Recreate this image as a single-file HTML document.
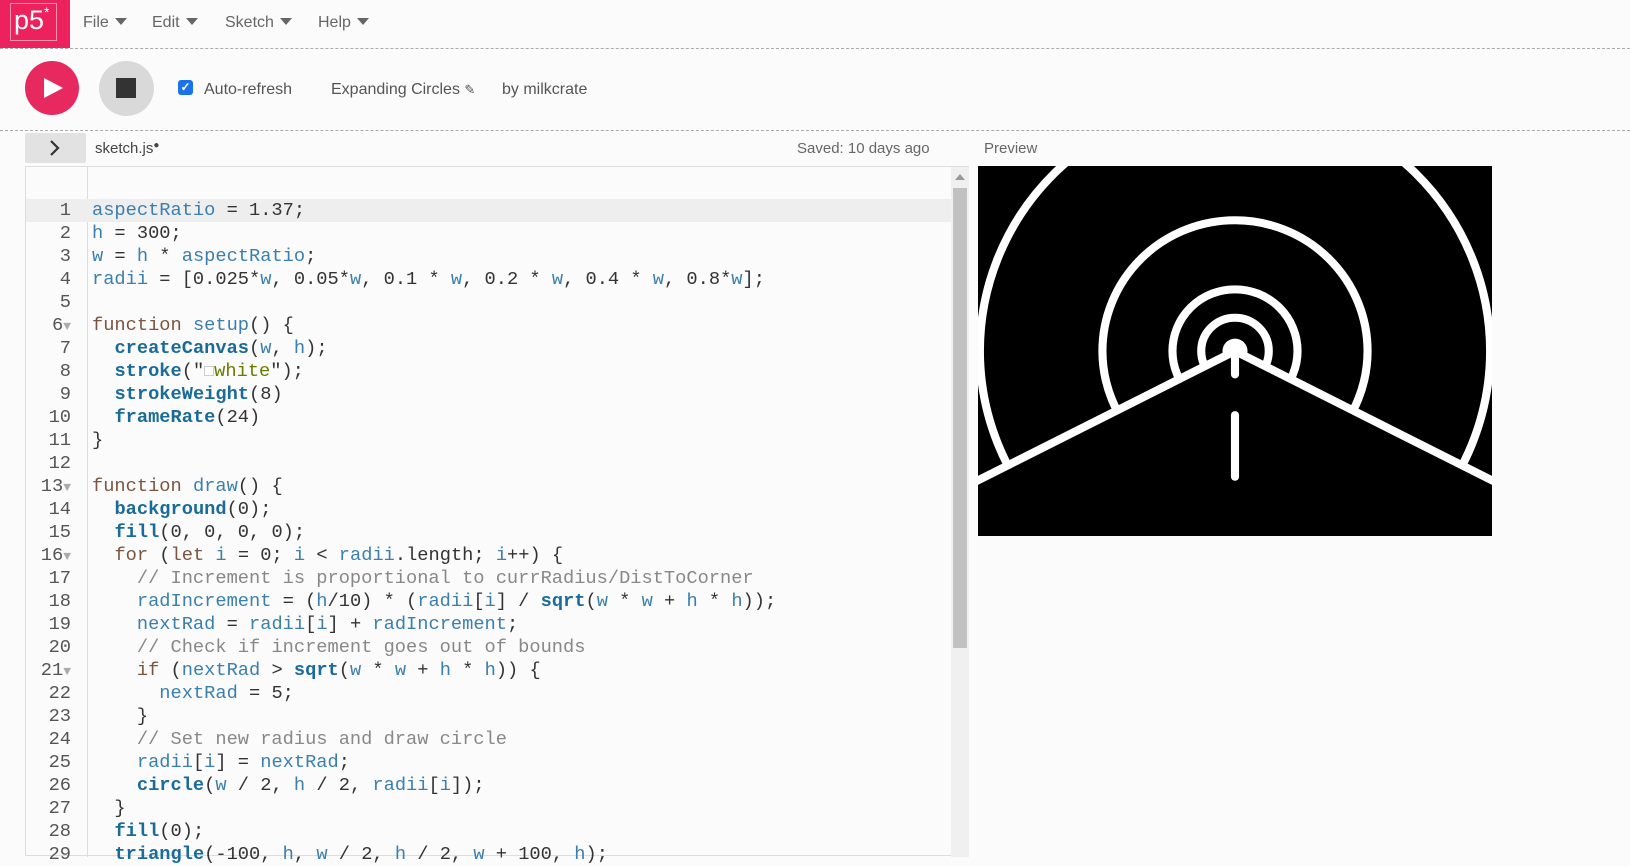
<!DOCTYPE html>
<html><head><meta charset="utf-8"><style>
*{margin:0;padding:0;box-sizing:border-box}
body{width:1630px;height:848px;overflow:hidden;background:#fbfbfb;font-family:"Liberation Sans",sans-serif;color:#333;position:relative}
.abs{position:absolute}
.menu{top:14px;font-size:16px;color:#666}
.menu .tri{display:inline-block;width:0;height:0;border-left:6px solid transparent;border-right:6px solid transparent;border-top:7px solid #666;margin-left:6px;vertical-align:2px}
.dash{left:0;width:1630px;height:0;border-top:1px dashed #aaa}
.code{font-family:"Liberation Mono",monospace;font-size:18.7px;line-height:23px;white-space:pre}
.ln{position:absolute;left:25px;width:46px;text-align:right;color:#555}
.v{color:#3a7fae}.b{color:#1a6b9a;font-weight:bold}.k{color:#7a5640}.c{color:#888}.s{color:#6b7a00}
</style></head><body>
<div class="abs" style="left:0;top:0;width:70px;height:48px;background:#ed225d"></div>
<div class="abs" style="left:10px;top:3px;width:47px;height:38px;border:1px solid rgba(255,255,255,.5)"></div>
<div class="abs" style="left:14px;top:4px;color:#fff;font-size:27px">p5<span style="font-size:14px;vertical-align:12px">*</span></div>
<div class="abs menu" style="left:83px">File<span class="tri"></span></div>
<div class="abs menu" style="left:152px">Edit<span class="tri"></span></div>
<div class="abs menu" style="left:225px">Sketch<span class="tri"></span></div>
<div class="abs menu" style="left:318px">Help<span class="tri"></span></div>
<div class="abs dash" style="top:48px"></div>
<div class="abs" style="left:25px;top:61px;width:54px;height:54px;border-radius:50%;background:#e8295f"></div>
<div class="abs" style="left:44px;top:78px;width:0;height:0;border-top:10px solid transparent;border-bottom:10px solid transparent;border-left:19px solid #fff"></div>
<div class="abs" style="left:99px;top:61px;width:55px;height:55px;border-radius:50%;background:#d9d9d9"></div>
<div class="abs" style="left:116px;top:78px;width:20px;height:20px;background:#333"></div>
<div class="abs" style="left:178px;top:80px;width:15px;height:15px;border-radius:3px;background:#1a73e8;color:#fff;font-size:12px;line-height:15px;text-align:center;font-weight:bold">✓</div>
<div class="abs" style="left:204px;top:81px;font-size:16px;color:#555">Auto-refresh</div>
<div class="abs" style="left:331px;top:81px;font-size:16px;color:#555">Expanding Circles <span style="font-size:13px">✎</span></div>
<div class="abs" style="left:502px;top:81px;font-size:16px;color:#555">by milkcrate</div>
<div class="abs dash" style="top:130px"></div>
<div class="abs" style="left:25px;top:133px;width:61px;height:30px;background:#e2e2e2;border-radius:2px"></div>
<svg class="abs" style="left:47px;top:139px" width="16" height="18"><path d="M4 2 L11 9 L4 16" fill="none" stroke="#333" stroke-width="2.2"/></svg>
<div class="abs" style="left:95px;top:140px;font-size:15px;color:#444">sketch.js<span style="font-size:10px;vertical-align:5px">●</span></div>
<div class="abs" style="left:797px;top:140px;font-size:15px;color:#666">Saved: 10 days ago</div>
<div class="abs" style="left:984px;top:140px;font-size:15px;color:#666">Preview</div>
<div class="abs" style="left:25px;top:166px;width:944px;height:690px;border:1px solid #ddd;background:#fbfbfb"></div>
<div class="abs" style="left:87px;top:167px;width:1px;height:690px;background:#ddd"></div>
<div class="abs" style="left:26px;top:199px;width:925px;height:23px;background:#eee"></div>
<div class="abs" style="left:951px;top:167px;width:18px;height:690px;background:#f0f0f0"></div>
<div class="abs" style="left:953px;top:188px;width:14px;height:460px;background:#c1c1c1"></div>
<div class="abs" style="left:955px;top:174px;width:0;height:0;border-left:5px solid transparent;border-right:5px solid transparent;border-bottom:6px solid #999"></div>
<div class="abs code" style="left:0;top:199px;width:100px">
<div class="ln" style="top:0">1</div><div class="ln" style="top:23px">2</div><div class="ln" style="top:46px">3</div><div class="ln" style="top:69px">4</div><div class="ln" style="top:92px">5</div><div class="ln" style="top:115px">6<span style="color:#aaa;font-size:13px">▼</span></div><div class="ln" style="top:138px">7</div><div class="ln" style="top:161px">8</div><div class="ln" style="top:184px">9</div><div class="ln" style="top:207px">10</div><div class="ln" style="top:230px">11</div><div class="ln" style="top:253px">12</div><div class="ln" style="top:276px">13<span style="color:#aaa;font-size:13px">▼</span></div><div class="ln" style="top:299px">14</div><div class="ln" style="top:322px">15</div><div class="ln" style="top:345px">16<span style="color:#aaa;font-size:13px">▼</span></div><div class="ln" style="top:368px">17</div><div class="ln" style="top:391px">18</div><div class="ln" style="top:414px">19</div><div class="ln" style="top:437px">20</div><div class="ln" style="top:460px">21<span style="color:#aaa;font-size:13px">▼</span></div><div class="ln" style="top:483px">22</div><div class="ln" style="top:506px">23</div><div class="ln" style="top:529px">24</div><div class="ln" style="top:552px">25</div><div class="ln" style="top:575px">26</div><div class="ln" style="top:598px">27</div><div class="ln" style="top:621px">28</div><div class="ln" style="top:644px">29</div>
</div>
<div class="abs code" style="left:92px;top:199px"><span class="v">aspectRatio</span> = 1.37;
<span class="v">h</span> = 300;
<span class="v">w</span> = <span class="v">h</span> * <span class="v">aspectRatio</span>;
<span class="v">radii</span> = [0.025*<span class="v">w</span>, 0.05*<span class="v">w</span>, 0.1 * <span class="v">w</span>, 0.2 * <span class="v">w</span>, 0.4 * <span class="v">w</span>, 0.8*<span class="v">w</span>];

<span class="k">function</span> <span class="v">setup</span>() {
  <span class="b">createCanvas</span>(<span class="v">w</span>, <span class="v">h</span>);
  <span class="b">stroke</span>("<span style="display:inline-block;width:10px;height:10px;border:1px solid #ccc;background:#fff"></span><span class="s">white</span>");
  <span class="b">strokeWeight</span>(8)
  <span class="b">frameRate</span>(24)
}

<span class="k">function</span> <span class="v">draw</span>() {
  <span class="b">background</span>(0);
  <span class="b">fill</span>(0, 0, 0, 0);
  <span class="k">for</span> (<span class="k">let</span> <span class="v">i</span> = 0; <span class="v">i</span> &lt; <span class="v">radii</span>.length; <span class="v">i</span>++) {
    <span class="c">// Increment is proportional to currRadius/DistToCorner</span>
    <span class="v">radIncrement</span> = (<span class="v">h</span>/10) * (<span class="v">radii</span>[<span class="v">i</span>] / <span class="b">sqrt</span>(<span class="v">w</span> * <span class="v">w</span> + <span class="v">h</span> * <span class="v">h</span>));
    <span class="v">nextRad</span> = <span class="v">radii</span>[<span class="v">i</span>] + <span class="v">radIncrement</span>;
    <span class="c">// Check if increment goes out of bounds</span>
    <span class="k">if</span> (<span class="v">nextRad</span> &gt; <span class="b">sqrt</span>(<span class="v">w</span> * <span class="v">w</span> + <span class="v">h</span> * <span class="v">h</span>)) {
      <span class="v">nextRad</span> = 5;
    }
    <span class="c">// Set new radius and draw circle</span>
    <span class="v">radii</span>[<span class="v">i</span>] = <span class="v">nextRad</span>;
    <span class="b">circle</span>(<span class="v">w</span> / 2, <span class="v">h</span> / 2, <span class="v">radii</span>[<span class="v">i</span>]);
  }
  <span class="b">fill</span>(0);
  <span class="b">triangle</span>(-100, <span class="v">h</span>, <span class="v">w</span> / 2, <span class="v">h</span> / 2, <span class="v">w</span> + 100, <span class="v">h</span>);</div>
<svg class="abs" style="left:978px;top:166px" width="514" height="370" viewBox="0 0 411 300" preserveAspectRatio="none">
<rect width="411" height="300" fill="#000"/>
<g fill="none" stroke="#fff" stroke-width="6.5">
<circle cx="205.5" cy="150" r="204"/>
<circle cx="205.5" cy="150" r="106"/>
<circle cx="205.5" cy="150" r="50"/>
<circle cx="205.5" cy="150" r="27"/>
</g>
<circle cx="205.5" cy="150" r="10" fill="#fff"/>
<polygon points="-100,306 205.5,150 511,306" fill="#000" stroke="#fff" stroke-width="6.5"/>
<line x1="205.5" y1="155" x2="205.5" y2="169" stroke="#fff" stroke-width="6.5" stroke-linecap="round"/>
<line x1="205.5" y1="202" x2="205.5" y2="252" stroke="#fff" stroke-width="6.5" stroke-linecap="round"/>
</svg>
</body></html>
